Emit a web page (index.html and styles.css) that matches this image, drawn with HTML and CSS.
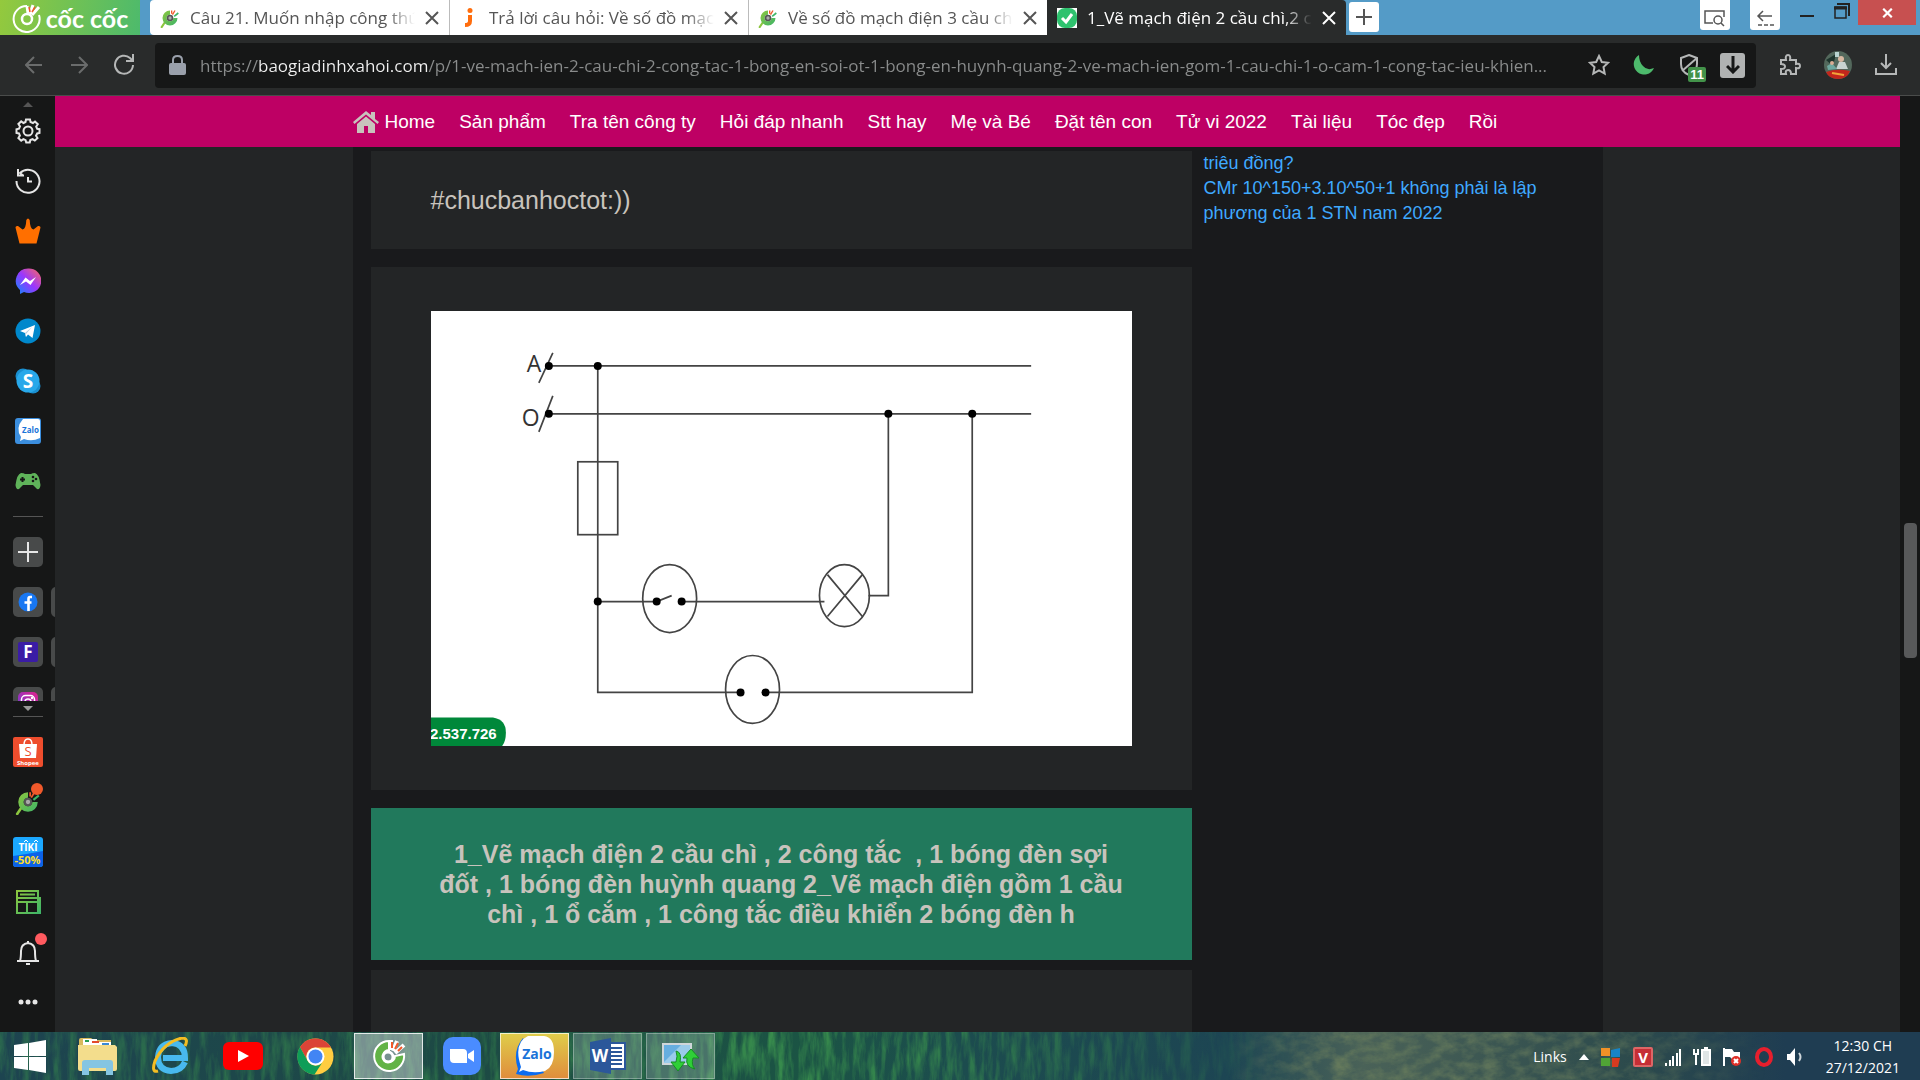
FILE: index.html
```
<!DOCTYPE html>
<html lang="vi">

<head>
  <meta charset="UTF-8" />
  <meta name="viewport" content="width=device-width, initial-scale=1.0" />
  <title>1_Vẽ mạch điện 2 cầu chì,2 công tắc</title>
  <link rel="stylesheet" href="styles.css">
</head>

<body>
  <!-- shared icons -->
  <svg class="defs" aria-hidden="true">
    <defs>
      <linearGradient id="leaf" x1="0" y1="0" x2="1" y2="1">
        <stop offset="0" stop-color="#8cc63f" />
        <stop offset="1" stop-color="#3fb568" />
      </linearGradient>
      <linearGradient id="messenger" x1="0" y1="1" x2="1" y2="0">
        <stop offset="0" stop-color="#0a8bff" />
        <stop offset="0.5" stop-color="#9a36ff" />
        <stop offset="1" stop-color="#ff6a5c" />
      </linearGradient>
      <linearGradient id="insta" x1="0" y1="1" x2="1" y2="0">
        <stop offset="0" stop-color="#6a3fe0" />
        <stop offset="1" stop-color="#e0218a" />
      </linearGradient>
      <symbol id="coccoc" viewBox="0 0 24 24">
        <path d="M6 17 L2 23" stroke="#8cc63f" stroke-width="2.4" stroke-linecap="round" />
        <path d="M12 3 A9 9 0 1 0 21 12 L16 12 A4 4 0 1 1 12 8 Z" fill="url(#leaf)" />
        <circle cx="12" cy="12" r="4" fill="#555" />
        <circle cx="12" cy="12" r="2" fill="#aaa" />
        <path d="M14 3 V7 M18 3 L15 8" stroke="#f1592a" stroke-width="1.6" />
        <path d="M22 6 L17 10" stroke="#3fb568" stroke-width="2" />
      </symbol>
      <symbol id="close" viewBox="0 0 14 14">
        <path d="M1 1 L13 13 M13 1 L1 13" stroke="currentColor" stroke-width="2" />
      </symbol>
    </defs>
  </svg>

  <header class="tab-strip">
    <button class="brand">
      <svg width="30" height="31" viewBox="0 0 30 31" fill="none" stroke="#fff">
        <path d="M15 4 A13 13 0 1 0 27 13" stroke-width="2" />
        <circle cx="15" cy="17" r="5" stroke-width="2.5" />
        <path d="M15 4 L16 11 M21 3 L18 12 M27 5 L20 13" stroke-width="3" />
        <path d="M17 5 L18 10 M23 5 L20 10" stroke="#f1592a" stroke-width="1.5" />
      </svg>
      <span>cốc cốc</span>
    </button>
    <nav class="tabs" aria-label="Tabs">
      <div class="tab">
        <svg class="favicon"><use href="#coccoc" /></svg>
        <a href="#" class="tab-title">Câu 21. Muốn nhập công thứ</a>
        <button class="tab-close" aria-label="Close"><svg width="14" height="14"><use href="#close" /></svg></button>
      </div>
      <div class="tab">
        <svg class="favicon" viewBox="0 0 20 20"><path d="M11 7 V13 Q11 17 6 17" fill="none" stroke="#ff6d0d" stroke-width="4" /><circle cx="11" cy="2.5" r="2.5" fill="#ff6d0d" /></svg>
        <a href="#" class="tab-title">Trả lời câu hỏi: Về số đồ mạch</a>
        <button class="tab-close" aria-label="Close"><svg width="14" height="14"><use href="#close" /></svg></button>
      </div>
      <div class="tab">
        <svg class="favicon"><use href="#coccoc" /></svg>
        <a href="#" class="tab-title">Về số đồ mạch điện 3 cầu chì</a>
        <button class="tab-close" aria-label="Close"><svg width="14" height="14"><use href="#close" /></svg></button>
      </div>
      <div class="tab active">
        <svg class="favicon" viewBox="0 0 20 20"><path d="M0 0H20V20H0Z" fill="#fff" /><rect x="0" y="0" width="20" height="20" rx="8" fill="#2ec26e" /><path d="M5 10 L9 14 L15 6" fill="none" stroke="#fff" stroke-width="3" /></svg>
        <a href="#" class="tab-title">1_Vẽ mạch điện 2 cầu chì,2 cô</a>
        <button class="tab-close" aria-label="Close"><svg width="14" height="14"><use href="#close" /></svg></button>
      </div>
    </nav>
    <button class="new-tab" aria-label="New tab">
      <svg width="16" height="16" stroke="#555" stroke-width="2"><path d="M8 0V16M0 8H16" /></svg>
    </button>
    <div class="window-tools">
      <button class="tool" aria-label="Search tabs">
        <svg width="22" height="18" fill="none" stroke="#555" stroke-width="1.5"><path d="M9 14H1V2H20V8" /><circle cx="14" cy="11" r="4" /><path d="M17 14L20 17" /></svg>
      </button>
      <button class="tool" aria-label="Back list">
        <svg width="18" height="18" fill="none" stroke="#555" stroke-width="1.5"><path d="M16 7H2M7 2L2 7L7 12" /><path d="M2 16H18" stroke-dasharray="4 2" /></svg>
      </button>
      <button class="win" aria-label="Minimize"><svg width="14" height="20"><path d="M0 16H14" stroke="#222" stroke-width="2" /></svg></button>
      <button class="win" aria-label="Restore"><svg width="16" height="20" fill="none" stroke="#222"><path d="M3 4H15V16" stroke-width="2" /><rect x="1" y="7" width="11" height="11" stroke-width="1.5" /><path d="M0 8H13" stroke-width="3" /></svg></button>
      <button class="win-close" aria-label="Close window"><svg width="11" height="10" viewBox="0 0 14 14"><path d="M1 1L13 13M13 1L1 13" stroke="#fff" stroke-width="3" /></svg></button>
    </div>
  </header>

  <div class="toolbar">
    <button class="icon-btn dim" aria-label="Back"><svg width="18" height="18" viewBox="0 0 18 18"><path d="M17 9H2M9 1L1 9L9 17" /></svg></button>
    <button class="icon-btn dim" aria-label="Forward"><svg width="18" height="18" viewBox="0 0 18 18"><path d="M1 9H16M9 1L17 9L9 17" /></svg></button>
    <button class="icon-btn" aria-label="Reload"><svg width="22" height="22" viewBox="0 0 22 22"><path d="M20 11A9 9 0 1 1 17 4L20 7M20 0V7H13" /></svg></button>
    <div class="address">
      <svg width="17" height="21" viewBox="0 0 17 21"><rect y="8" width="17" height="12" rx="2" fill="#9aa0ab" /><path d="M4 9V5Q4 1 8.5 1T13 5V9" fill="none" stroke="#9aa0ab" stroke-width="2" /></svg>
      <input class="url" type="text" aria-label="Address" value="https://baogiadinhxahoi.com/p/1-ve-mach-ien-2-cau-chi-2-cong-tac-1-bong-en-soi-ot-1-bong-en-huynh-quang-2-ve-mach-ien-gom-1-cau-chi-1-o-cam-1-cong-tac-ieu-khien...">
      <button class="icon-btn" aria-label="Bookmark"><svg width="22" height="22" viewBox="0 0 22 22"><path d="M11 2L13.8 8L20 8.7L15.5 13L16.7 19.5L11 16.3L5.3 19.5L6.5 13L2 8.7L8.2 8Z" /></svg></button>
      <button class="icon-btn" aria-label="Dark mode"><svg width="22" height="22" viewBox="0 0 22 22"><path class="moon" d="M6 1A10.5 10.5 0 1 0 21 14Q14 17 10 12Q6 8 6 1Z" /></svg></button>
      <button class="icon-btn shield" aria-label="Ad block">
        <svg width="20" height="22" viewBox="0 0 20 22"><path d="M10 1L18 4V10Q18 18 10 21Q2 18 2 10V4ZM3 17L18 4" /></svg>
        <span class="count">11</span>
      </button>
      <button class="save" aria-label="Save video"><svg width="14" height="18" fill="none" stroke="#161717" stroke-width="3"><path d="M7 0V15M1 10L7 16L13 10" /></svg></button>
    </div>
    <button class="icon-btn" aria-label="Extensions"><svg width="22" height="22" viewBox="0 0 22 22"><path d="M2 6H7Q6 1 9 1T11 6H17V10Q21 9 21 12T17 14V20H12Q12 16 9 16T7 20H2V15Q6 15 6 12.5T2 10Z" /></svg></button>
    <button class="icon-btn" aria-label="Profile">
      <svg width="28" height="28" viewBox="0 0 28 28" class="avatar"><circle cx="14" cy="14" r="14" fill="#53685c" /><path d="M2 9L12 3L9 15Z" fill="#1e352d" /><path d="M11 1H15V6H11Z" fill="#b9d3d0" /><circle cx="17" cy="8" r="3" fill="#d8b9a2" /><path d="M12 18L15 11H21L24 18Z" fill="#c9d4d1" /><path d="M3 15L8 12L13 18L4 19Z" fill="#6fa8a0" /><circle cx="8" cy="12" r="2" fill="#dcae95" /><path d="M2 21Q13 17 26 20Q23 28 14 28Q5 28 2 21Z" fill="#c2261c" /><path d="M8 22L20 24" stroke="#f0a43a" stroke-width="2" /></svg>
    </button>
    <button class="icon-btn" aria-label="Downloads"><svg width="22" height="22" viewBox="0 0 22 22"><path d="M1 14V20H21V14M11 0V14M6 9L11 14L16 9" /></svg></button>
  </div>

  <div class="workspace">
    <aside class="sidebar" aria-label="Side panel">
      <div class="scroll-up"><svg width="10" height="6"><path d="M0 6L5 1L10 6Z" fill="#555" /></svg></div>
      <button aria-label="Settings"><svg class="side-icon line" viewBox="0 0 26 26"><circle cx="13" cy="13" r="4.5" /><path d="M10.5 4L11 1.5H15L15.5 4L18 5L20 3.5L22.8 6.2L21.2 8.5L22.2 10.8L24.5 11.2V15L22.2 15.5L21 17.8L22.5 20L19.8 22.6L17.5 21.2L15.3 22L14.8 24.5H11.2L10.6 22.2L8.4 21.2L6.2 22.7L3.4 20L4.9 17.6L4 15.4L1.5 15V11.2L4 10.6L5 8.4L3.4 6L6.2 3.4L8.5 5Z" /></svg></button>
      <button aria-label="History"><svg class="side-icon line" viewBox="0 0 26 26"><path d="M1.5 13A11.5 11.5 0 1 0 5 5L8 7.5M3 1V7.5H9M13 9V13.5H17" /></svg></button>
      <button aria-label="Rewards"><svg class="side-icon" viewBox="0 0 26 26"><path d="M4.5 25.5H21.5L25.5 9.5Q25.5 7.5 23 8L18.5 11.5Q15 11 14.7 2Q13 -1 11.3 2Q11 11 7.5 11.5L3 8Q0.500 7.5 0.5 9.5Z" fill="#ff6f00" /></svg></button>
      <button aria-label="Messenger"><svg class="side-icon" viewBox="0 0 26 26"><path d="M13 0.5A12.3 12.3 0 1 1 9 24L5 26V22A12.3 12.3 0 0 1 13 0.5Z" fill="url(#messenger)" /><path d="M5 17L10.5 9.5L15 13L21 9L15.5 17L11 13.5Z" fill="#fff" /></svg></button>
      <button aria-label="Telegram"><svg class="side-icon" viewBox="0 0 26 26"><circle cx="13" cy="13" r="12.5" fill="#0088cc" /><path d="M5 13L20 7L17.5 20L13 16.5L11 19L10 15Z" fill="#fff" /><path d="M10 15L17 9L11 16V19Z" fill="#b5cfe0" /></svg></button>
      <button aria-label="Skype"><svg class="side-icon" viewBox="0 0 26 26"><circle cx="8" cy="8" r="7.5" fill="#1a8fd0" /><circle cx="18" cy="18" r="7.5" fill="#1a8fd0" /><circle cx="13" cy="13" r="11.5" fill="#28a8ea" /><text x="13" y="19.5" class="glyph" font-size="19">S</text></svg></button>
      <button aria-label="Zalo"><svg class="side-icon" viewBox="0 0 26 26"><rect width="26" height="26" rx="3" fill="#3b8ede" /><path d="M8 1H23Q25 1 25 3V20Q17 24 9 21L5 23L6 19Q0 10 8 1Z" fill="#fff" /><text x="15.5" y="14.5" class="glyph zalo" font-size="8">Zalo</text></svg></button>
      <button aria-label="Games"><svg class="side-icon" viewBox="0 0 26 26"><path d="M6 5Q9 5 10 6H16Q17 5 20 5Q24 6 25.5 17Q25 22 22 21L18 17H8L4 21Q1 22 0.5 17Q2 6 6 5Z" fill="#5fb35a" /><path d="M5 11.5H10M7.5 9V14" stroke="#161717" stroke-width="2" /><g fill="#161717"><circle cx="18" cy="9" r="1.3" /><circle cx="18" cy="13" r="1.3" /><circle cx="21" cy="11" r="1.3" /></g></svg></button>

      <hr>

      <div class="pinned">
        <div class="pin-row"><button class="pin" aria-label="Add"><svg width="20" height="20"><path d="M10 0V20M0 10H20" stroke="#e6e6e6" stroke-width="2" /></svg></button></div>
        <div class="pin-row">
          <button class="pin" aria-label="Facebook"><svg width="20" height="20" viewBox="0 0 20 20"><circle cx="10" cy="10" r="9.5" fill="#1877f2" /><path d="M14 5H12Q10.5 5 10.5 7V19M6.5 10.5H13.5" fill="none" stroke="#fff" stroke-width="2.6" /></svg></button>
          <span class="pin"></span>
        </div>
        <div class="pin-row">
          <button class="pin" aria-label="F page"><svg width="20" height="20" viewBox="0 0 20 20"><rect width="20" height="20" rx="2" fill="#3a1ca5" /><text x="10" y="16" class="glyph" font-size="17">F</text></svg></button>
          <span class="pin"></span>
        </div>
        <div class="pin-row">
          <button class="pin" aria-label="Instagram"><svg width="20" height="20" viewBox="0 0 20 20" fill="none" stroke="#fff" stroke-width="1.5"><rect width="20" height="20" rx="5" fill="url(#insta)" stroke="none" /><rect x="3.5" y="3.5" width="13" height="13" rx="4" /><circle cx="10" cy="10" r="3" /><circle cx="14" cy="6" r="0.5" /></svg></button>
          <span class="pin"></span>
        </div>
      </div>
      <div class="scroll-down"><svg width="10" height="6"><path d="M0 0L5 5L10 0Z" fill="#999" /></svg></div>
      <hr>

      <button aria-label="Shopee"><svg width="30" height="30" viewBox="0 0 30 30"><rect width="30" height="30" rx="2" fill="#ee4d2d" /><path d="M6 7H24L23 21H7Z" fill="#fff" /><path d="M11 8Q11 2 15 2T19 8" fill="none" stroke="#fff" stroke-width="1.5" /><text x="15" y="19" font-size="13" class="glyph shopee">S</text><text x="15" y="28" font-size="6" class="glyph">Shopee</text></svg></button>
      <button aria-label="Cốc Cốc points"><svg class="side-icon"><use href="#coccoc" /></svg><span class="dot orange"></span></button>
      <button aria-label="Tiki"><svg width="30" height="30" viewBox="0 0 30 30"><rect width="30" height="30" rx="3" fill="#1ba8ff" /><path d="M0 19Q15 17 30 14V27Q30 30 27 30H3Q0 30 0 27Z" fill="#0b62e8" /><path d="M11 5L13 3L15 5M21 5L23 3L25 5" fill="none" stroke="#fff" /><text x="15" y="14" font-size="10" class="glyph">TIKI</text><text x="14.5" y="27" font-size="11" class="glyph sale">-50%</text></svg></button>
      <button aria-label="News"><svg class="side-icon" viewBox="0 0 26 26" fill="none" stroke="url(#leaf)" stroke-width="2"><path d="M2 2H23V24H2ZM2 9H23M5 5.5H20M2 13H23M12 13V24M25 8V24H22" /></svg></button>
      <button aria-label="Notifications"><svg class="side-icon line" viewBox="0 0 26 26"><path d="M2 22H24M5 22Q6 19 6 12Q6 5 13 4Q20 5 20 12Q20 19 21 22M11 25H15M13 2V4" /></svg><span class="dot red"></span></button>
      <button aria-label="More"><svg width="20" height="6" fill="#e6e6e6"><circle cx="3" cy="3" r="2.5" /><circle cx="10" cy="3" r="2.5" /><circle cx="17" cy="3" r="2.5" /></svg></button>
    </aside>

    <div class="page">
      <nav class="site-nav">
        <ul>
          <li><a href="#"><svg width="26" height="22" viewBox="0 0 26 22" fill="#c8c3bc"><path d="M0 11L13 0L18 4V1H22V8L26 11L24.5 13L13 3.5L1.5 13Z" /><path d="M4 13L13 5.5L22 13V22H15V15H11V22H4Z" /></svg>Home</a></li>
          <li><a href="#">Sản phẩm</a></li>
          <li><a href="#">Tra tên công ty</a></li>
          <li><a href="#">Hỏi đáp nhanh</a></li>
          <li><a href="#">Stt hay</a></li>
          <li><a href="#">Mẹ và Bé</a></li>
          <li><a href="#">Đặt tên con</a></li>
          <li><a href="#">Tử vi 2022</a></li>
          <li><a href="#">Tài liệu</a></li>
          <li><a href="#">Tóc đẹp</a></li>
          <li><a href="#">Rồi</a></li>
        </ul>
      </nav>
      <div class="container">
        <main>
          <p class="card note">#chucbanhoctot:))</p>
          <figure class="card diagram">
            <!-- wiring: fuse, switch, lamp and socket between A and O -->
            <svg viewBox="0 0 702 436">
              <rect width="702" height="436" fill="#fff" />
              <g fill="none" stroke="#444" stroke-width="1.7">
                <path d="M117 55H601M117 103H601M167 55V382H310M334 382H542V103" />
                <path d="M167 291H226L241 285M250 291H394M438 285H458V103" />
                <path d="M122 42L108 72M122 85L108 121" />
                <rect x="147" y="151" width="40" height="73" />
                <ellipse cx="239" cy="288" rx="27" ry="34" />
                <ellipse cx="322" cy="379" rx="27" ry="34" />
                <ellipse cx="414" cy="285" rx="25" ry="31" />
                <path d="M397 264L432 306M432 264L397 306" />
              </g>
              <g fill="#000">
                <circle cx="118" cy="55" r="4" />
                <circle cx="167" cy="55" r="4" />
                <circle cx="118" cy="103" r="4" />
                <circle cx="458" cy="103" r="4" />
                <circle cx="542" cy="103" r="4" />
                <circle cx="167" cy="291" r="4" />
                <circle cx="226" cy="291" r="4" />
                <circle cx="251" cy="291" r="4" />
                <circle cx="310" cy="382" r="4" />
                <circle cx="335" cy="382" r="4" />
              </g>
              <text x="96" y="61" class="pole">A</text>
              <text x="91" y="115" class="pole">O</text>
              <path d="M0 407H62Q75 409 75 422Q75 431 71 436H0Z" fill="#00883a" />
              <text x="-1" y="429" class="hotline">2.537.726</text>
            </svg>
          </figure>
          <h2 class="heading">1_Vẽ mạch điện 2 cầu chì , 2 công tắc&nbsp; , 1 bóng đèn sợi đốt , 1 bóng đèn huỳnh quang 2_Vẽ mạch điện gồm 1 cầu chì , 1 ổ cắm , 1 công tắc điều khiển 2 bóng đèn h</h2>
          <div class="card next"></div>
        </main>
        <aside class="related">
          <a href="#">triêu đồng?</a>
          <a href="#">CMr 10^150+3.10^50+1 không phải là lập phương của 1 STN nam 2022</a>
        </aside>
      </div>
    </div>
    <div class="scrollbar"><div class="thumb"></div></div>
  </div>

  <footer class="taskbar">
    <svg class="grass" preserveAspectRatio="none" aria-hidden="true">
      <defs>
        <filter id="blades" x="0" y="0" width="100%" height="100%" color-interpolation-filters="sRGB">
          <feTurbulence type="fractalNoise" baseFrequency="0.13 0.025" numOctaves="4" seed="4" />
          <feColorMatrix values="0 0 0 0 0.22  0 0 0 0 0.55  0 0 0 0 0.3  2.6 0 0 0 -1" />
        </filter>
        <filter id="moss" x="0" y="0" width="100%" height="100%" color-interpolation-filters="sRGB">
          <feTurbulence type="fractalNoise" baseFrequency="0.06 0.1" numOctaves="4" seed="9" />
          <feColorMatrix values="0 0 0 0 0.4  0 0 0 0 0.48  0 0 0 0 0.36  2 0 0 0 -0.7" />
        </filter>
        <linearGradient id="fade-blades">
          <stop offset="0" stop-color="#fff" stop-opacity="0.5" />
          <stop offset="0.35" stop-color="#fff" stop-opacity="0.6" />
          <stop offset="0.4" stop-color="#fff" />
          <stop offset="0.48" stop-color="#fff" stop-opacity="0.8" />
          <stop offset="0.68" stop-color="#fff" stop-opacity="0" />
        </linearGradient>
        <linearGradient id="fade-moss">
          <stop offset="0.64" stop-color="#fff" stop-opacity="0" />
          <stop offset="0.7" stop-color="#fff" />
          <stop offset="0.84" stop-color="#fff" stop-opacity="0.6" />
          <stop offset="0.92" stop-color="#fff" stop-opacity="0" />
        </linearGradient>
        <mask id="blades-mask"><rect width="100%" height="100%" fill="url(#fade-blades)" /></mask>
        <mask id="moss-mask"><rect width="100%" height="100%" fill="url(#fade-moss)" /></mask>
      </defs>
      <g mask="url(#blades-mask)"><rect width="100%" height="100%" filter="url(#blades)" /></g>
      <g mask="url(#moss-mask)"><rect width="100%" height="100%" filter="url(#moss)" /></g>
    </svg>
    <button class="start" aria-label="Start"><svg width="32" height="33" viewBox="0 0 32 33" fill="#fff"><path d="M0 5L14 3V16H0ZM15 3L32 0V16H15ZM0 17H14V30L0 28ZM15 17H32V33L15 30Z" /></svg></button>
    <button class="app" aria-label="Explorer"><svg width="40" height="38" viewBox="0 0 40 38"><path d="M2 3Q2 1 4 1H14L17 3H34V10H2Z" fill="#d9b95c" /><path d="M6 2H20V9H6ZM18 5H34V9H18Z" fill="#fff" /><path d="M8 4H12" stroke="#2a9d50" stroke-width="2" /><path d="M15 5H22" stroke="#e34b2c" stroke-width="2" /><path d="M25 7H32" stroke="#3a8ad6" stroke-width="2" /><path d="M1 8H38L40 10V32Q40 34 38 34H3Q1 34 1 32Z" fill="#f3dd8c" /><path d="M5 38V26Q5 23 8 23H33Q36 23 36 26V38H29V31H12V38Z" fill="#85c5e2" /></svg></button>
    <button class="app" aria-label="Internet Explorer"><svg width="38" height="38" viewBox="0 0 38 38" fill="none"><path d="M34 25Q30 34 20 34Q7 33 7 20Q8 7 21 6Q34 7 34 21H12" stroke="#48b9ee" stroke-width="6" /><path d="M7 34Q0 36 4 24Q13 5 31 1Q38 1 34 9" stroke="#f3bd23" stroke-width="3" /></svg></button>
    <button class="app" aria-label="YouTube"><svg width="40" height="28" viewBox="0 0 40 28"><rect width="40" height="28" rx="6" fill="#f00" /><path d="M15 8L26 14L15 20Z" fill="#fff" /></svg></button>
    <button class="app" aria-label="Chrome"><svg width="37" height="37" viewBox="0 0 37 37"><circle cx="18.5" cy="18.5" r="18" fill="#ffcd41" /><path d="M3 9A18 18 0 0 1 34 9.5H18.5A9 9 0 0 0 10 22Z" fill="#db4437" /><path d="M3 9A18 18 0 0 0 17.5 36.5L25 25A9 9 0 0 1 10.7 23Z" fill="#0f9d58" /><circle cx="18.5" cy="18.5" r="9" fill="#fff" /><circle cx="18.5" cy="18.5" r="7" fill="#4285f4" /></svg></button>
    <button class="app current" aria-label="Cốc Cốc"><svg width="36" height="36" viewBox="0 0 36 36" fill="none"><path d="M18 3A15 15 0 1 0 33 16L24 18A6 6 0 1 1 18 12Z" fill="#62b346" stroke="#fff" stroke-width="2" /><circle cx="17" cy="19" r="5" stroke="#fff" stroke-width="3" /><path d="M20 2V12M26 3L22 13M33 7L24 15" stroke="#fff" stroke-width="4" /><path d="M21 4V10M27 5L24 11M31 9L27 13" stroke="#f1592a" stroke-width="2" /></svg></button>
    <button class="app" aria-label="Zoom"><svg width="38" height="38" viewBox="0 0 38 38"><rect width="38" height="38" rx="10" fill="#4a8cff" /><path d="M7 12H20Q24 12 24 16V26H11Q7 26 7 22ZM25 17L31 13V25L25 21Z" fill="#fff" /></svg></button>
    <button class="app zalo-app" aria-label="Zalo"><svg width="42" height="40" viewBox="0 0 42 40"><path d="M9 2Q-2 15 4 33L2 38Q15 42 30 37Z" fill="#0b6cf0" /><path d="M14 0H30Q40 1 40 16T31 35Q19 38 9 34L5 36L7 31Q-1 7 14 0Z" fill="#fff" /><text x="23" y="23" font-size="14" class="glyph zalo">Zalo</text></svg></button>
    <button class="app open" aria-label="Word"><svg width="36" height="36" viewBox="0 0 36 36"><rect x="18" y="5" width="17" height="26" fill="#fff" stroke="#2b579a" stroke-width="2" /><path d="M21 10H32M21 14H32M21 18H32M21 22H32M21 26H32" stroke="#2b579a" stroke-width="2" /><path d="M0 4L21 0V36L0 32Z" fill="#2b579a" /><text x="10" y="24" font-size="17" class="glyph">W</text></svg></button>
    <button class="app open" aria-label="Sync"><svg width="38" height="32" viewBox="0 0 38 32"><rect x="1" y="4" width="28" height="20" fill="#66aee0" stroke="#cfd6da" stroke-width="2" /><path d="M2 22L19 5H28V23H2Z" fill="#9acbea" /><path d="M14 11Q20 12 18 22H23L16 31L9 22H14Q16 16 14 11ZM33 29Q23 27 25 18H21L29 9L37 18H31Q29 25 33 29Z" fill="#2fcf37" stroke="#168d24" /></svg></button>

    <div class="tray">
      <button class="links">Links</button>
      <button aria-label="Show hidden icons"><svg width="10" height="6"><path d="M0 6L5 0L10 6Z" fill="#fff" /></svg></button>
      <button aria-label="Windows update"><svg width="20" height="20"><path d="M0 1H9V9H0Z" fill="#f09127" /><path d="M10 3L19 1V10H10Z" fill="#1784c7" /><path d="M0 11H9V19H0Z" fill="#50a336" /><path d="M11 11H19L17 20H11Z" fill="#d83a20" /></svg></button>
      <button aria-label="Unikey"><svg width="20" height="20" viewBox="0 0 20 20"><rect width="20" height="20" rx="2" fill="#d66" /><rect x="2" y="2" width="16" height="16" fill="#c52e35" /><text x="10" y="16" font-size="15" class="glyph">V</text></svg></button>
      <button aria-label="Network"><svg width="16" height="18" stroke="#fff" stroke-width="2"><path d="M1 18V15M5 18V12M8 18V8M12 18V5M15 18V1" /></svg></button>
      <button aria-label="Battery"><svg width="18" height="20" fill="none" stroke="#fff" stroke-width="2"><path d="M1 2V6M5 2V6M0 7H6M3 7V18" /><rect x="9" y="3" width="8" height="15" fill="#dfe5e6" /><path d="M11 1H15" /></svg></button>
      <button aria-label="Action center"><svg width="19" height="20"><path d="M1 1V19" stroke="#fff" stroke-width="2" /><path d="M2 2H9L11 5H17V13H10L7 10H2Z" fill="#fff" /><circle cx="13" cy="14" r="5" fill="#e03028" /><path d="M11 12L15 16M15 12L11 16" stroke="#fff" stroke-width="2" /></svg></button>
      <button aria-label="Opera"><svg width="20" height="20" viewBox="0 0 20 20"><ellipse cx="10" cy="10" rx="7" ry="8" fill="none" stroke="#e71f2d" stroke-width="4" /></svg></button>
      <button aria-label="Volume"><svg width="18" height="20"><path d="M1 7H4L9 1V19L4 13H1Z" fill="#fff" /><path d="M13 6Q16 10 13 14" fill="none" stroke="#cfd6da" stroke-width="2" /></svg></button>
      <time class="clock">12:30 CH<br>27/12/2021</time>
    </div>
  </footer>
</body>

</html>
```
FILE: styles.css
```
* {
  box-sizing: border-box;
}

body {
  margin: 0;
  height: 100vh;
  display: flex;
  flex-direction: column;
  overflow: hidden;
  background-color: #161717;
  font-family: "Liberation Sans", Arial, sans-serif;
}

button {
  display: flex;
  justify-content: center;
  align-items: center;
  padding: 0;
  border: 0;
  background: none;
  color: inherit;
  font: inherit;
  cursor: pointer;
}

a {
  text-decoration: none;
}

svg {
  display: block;
  flex-shrink: 0;
}

.defs {
  position: absolute;
  width: 0;
  height: 0;
}

.glyph {
  fill: #fff;
  font-family: "Open Sans", sans-serif;
  font-weight: 700;
  text-anchor: middle;
}

.zalo {
  fill: #1a73d9;
}

.shopee {
  fill: #ee4d2d;
  font-weight: 400;
}

.sale {
  fill: #ffdd26;
}

/* tab strip */

.tab-strip {
  display: flex;
  flex-shrink: 0;
  height: 35px;
  background-color: #549bc7;
  font-family: "Open Sans", sans-serif;
}

.brand {
  width: 140px;
  gap: 4px;
  background: linear-gradient(100deg, #94c93d, #4dba6c);
  color: #fff;
  font-family: Lato, sans-serif;
  font-size: 25px;
  font-weight: 700;
}

.tabs {
  display: flex;
  flex: 0 1 1196px;
  min-width: 0;
  margin-left: 10px;
}

.tab {
  display: flex;
  flex: 1;
  align-items: center;
  min-width: 0;
  padding: 0 10px;
  background-color: #fff;
  color: #555;
}

.tab:first-child {
  border-radius: 4px 0 0 4px;
}

.tab + .tab {
  box-shadow: inset 1px 0 #bbb;
}

.tab.active {
  background-color: #292b2b;
  box-shadow: none;
  color: #fff;
  border-radius: 0 4px 0 0;
}

.favicon {
  width: 20px;
  height: 20px;
}

.tab-title {
  flex: 1;
  margin: 0 10px;
  overflow: hidden;
  color: inherit;
  font-size: 17px;
  line-height: 26px;
  white-space: nowrap;
  mask-image: linear-gradient(to left, transparent, #000 28px);
}

.new-tab {
  width: 30px;
  height: 30px;
  margin: 2px 0 0 3px;
  border-radius: 3px;
  background-color: #fff;
}

.window-tools {
  display: flex;
  align-items: flex-start;
  gap: 20px;
  margin-left: auto;
  padding-right: 4px;
}

.tool {
  width: 30px;
  height: 30px;
  border-radius: 0 0 3px 3px;
  background-color: #fff;
}

.tool svg {
  margin-top: 6px;
}

.win-close {
  width: 58px;
  height: 25px;
  margin-left: -12px;
  background-color: #c75050;
}

/* toolbar */

.toolbar {
  display: flex;
  flex-shrink: 0;
  align-items: center;
  gap: 17px;
  height: 61px;
  padding: 0 20px;
  border-bottom: 1px solid #4a4c4b;
  background-color: #292b2b;
}

.icon-btn {
  width: 28px;
  height: 28px;
}

.icon-btn svg {
  fill: none;
  stroke: #b5b7b7;
  stroke-width: 2;
}

.icon-btn.dim svg {
  stroke: #6a6c6c;
}

.icon-btn .avatar {
  stroke: none;
}

.icon-btn .moon {
  fill: #4dba6c;
  stroke: none;
}

.address {
  display: flex;
  flex: 1;
  align-items: center;
  gap: 17px;
  height: 45px;
  padding: 0 11px 0 14px;
  border-radius: 4px;
  background-color: #161717;
}

.address ~ .icon-btn {
  margin-left: 3px;
}

.url {
  flex: 1;
  min-width: 0;
  margin-left: -3px;
  padding: 0;
  border: 0;
  outline: 0;
  /* host part is brighter than the rest */
  background: linear-gradient(to right, #8a8c8c 58px, #f2f2f2 58px, #f2f2f2 228px, #8a8c8c 228px);
  background-clip: text;
  color: transparent;
  font-family: "Open Sans", sans-serif;
  font-size: 17px;
}

.shield {
  position: relative;
}

.count {
  position: absolute;
  right: -3px;
  bottom: -3px;
  padding: 0 2px;
  border-radius: 2px;
  background-color: #43934a;
  color: #fff;
  font-size: 13px;
  font-weight: 700;
  line-height: 15px;
}

.save {
  width: 25px;
  height: 25px;
  border-radius: 3px;
  background-color: #b0b2b2;
}

/* main area */

.workspace {
  display: flex;
  flex: 1;
  min-height: 0;
}

.sidebar {
  display: flex;
  flex-direction: column;
  width: 55px;
  padding-bottom: 5px;
  background-color: #161717;
}

.sidebar > button {
  position: relative;
  flex-shrink: 0;
  height: 50px;
}

.side-icon {
  width: 26px;
  height: 26px;
}

.line {
  fill: none;
  stroke: #e6e6e6;
  stroke-width: 2;
}

.scroll-up,
.scroll-down {
  display: flex;
  flex-shrink: 0;
  justify-content: center;
  height: 10px;
  padding-top: 5px;
}

.scroll-down {
  height: 15px;
}

.sidebar hr {
  width: 30px;
  margin: 10px auto;
  border: 0;
  border-top: 1px solid #555;
}

.scroll-down + hr {
  margin-top: 0;
}

.pinned {
  flex: 1;
  min-height: 0;
  overflow: hidden;
}

.pin-row {
  display: flex;
  gap: 8px;
  padding: 10px 0 10px 13px;
}

.pin {
  flex-shrink: 0;
  width: 30px;
  height: 30px;
  border-radius: 5px;
  background-color: #484a4a;
}

.dot {
  position: absolute;
  top: 6px;
  right: 12px;
  width: 12px;
  height: 12px;
  border-radius: 50%;
}

.orange {
  background-color: #f0592b;
}

.red {
  right: 8px;
  background-color: #ff5a5f;
}

.page {
  flex: 1;
  display: flex;
  flex-direction: column;
  min-width: 0;
  overflow: hidden;
  background-color: #232526;
}

.site-nav {
  flex-shrink: 0;
  background-color: #be0064;
}

.site-nav ul {
  display: flex;
  gap: 24px;
  max-width: 1250px;
  margin: 0 auto;
  padding: 0;
  list-style-type: none;
}

.site-nav a {
  display: flex;
  align-items: center;
  gap: 6px;
  height: 51px;
  color: #fff;
  font-size: 19px;
  white-space: nowrap;
}

.container {
  display: grid;
  flex: 1;
  grid-template-columns: minmax(0, 1fr) 381px;
  gap: 12px;
  width: 100%;
  max-width: 1250px;
  margin: 0 auto;
  padding: 4px 18px 0;
  background-color: #191a1c;
}

.card {
  margin: 0 0 18px;
  padding: 44px 60px;
  background-color: #232526;
  color: #c8c3bc;
}

.note {
  padding: 34px 60px;
  font-size: 25px;
  line-height: 30px;
}

.diagram svg {
  width: 100%;
}

.pole {
  fill: #333;
  font-family: "Open Sans", sans-serif;
  font-size: 23px;
}

.hotline {
  fill: #fff;
  font-size: 15px;
  font-weight: 700;
}

.heading {
  margin: 0 0 10px;
  padding: 31px 64px;
  background-color: #21795c;
  color: #c8c3bc;
  font-size: 25px;
  line-height: 30px;
  text-align: center;
}

.next {
  height: 400px;
}

.related a {
  display: block;
  color: #3fa9ff;
  font-size: 18px;
  line-height: 25px;
}

.scrollbar {
  width: 20px;
  padding: 427px 3px 0 4px;
  background-color: #161717;
}

.thumb {
  height: 135px;
  border-radius: 4px;
  background-color: #58595a;
}

/* taskbar */

.taskbar {
  position: relative;
  display: flex;
  flex-shrink: 0;
  height: 48px;
  padding-top: 1px;
  background: linear-gradient(to right, #1d4450, #1d4a44 25%, #1b5444 42%, #1c4c4e 50%, #1d4553 64%, #4a6258 71%, #2c4a4c 85%, #1f3d52 93%);
  color: #fff;
  font-family: "Open Sans", sans-serif;
}

.grass {
  position: absolute;
  inset: 0;
  width: 100%;
  height: 100%;
}

.taskbar button,
.clock {
  position: relative;
}

.start {
  width: 60px;
}

.app {
  width: 69px;
  height: 46px;
  margin: 0 2px;
}

.current {
  background-color: rgba(255, 255, 255, 0.4);
  box-shadow: inset 0 0 0 1px rgba(255, 255, 255, 0.8);
}

.open {
  background-color: rgba(255, 255, 255, 0.2);
  box-shadow: inset 0 0 0 1px rgba(255, 255, 255, 0.3);
}

.zalo-app {
  background: linear-gradient(#dfce4a, #e08c3c);
  box-shadow: inset 0 0 0 1px rgba(255, 255, 255, 0.7);
}

.tray {
  display: flex;
  align-items: center;
  gap: 12px;
  margin-left: auto;
  padding-right: 20px;
}

.links,
.clock {
  font-size: 14px;
  line-height: 22px;
}

.clock {
  margin-left: 10px;
  text-align: center;
}
```
